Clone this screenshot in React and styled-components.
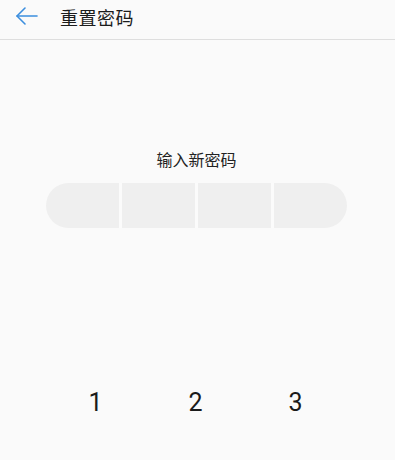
import React from "react";
import styled, { createGlobalStyle } from "styled-components";

const Global = createGlobalStyle`
  html, body {
    margin: 0;
    padding: 0;
    background: #fafafa;
    font-family: Roboto, "Noto Sans CJK SC", sans-serif;
  }
`;

const Page = styled.div`
  width: 395px;
  height: 460px;
  overflow: hidden;
  background: #fafafa;
  display: flex;
  flex-direction: column;
`;

const Header = styled.header`
  height: 39px;
  display: flex;
  align-items: center;
  border-bottom: 1.5px solid #dedede;
  padding-left: 14px;
  gap: 20px;
`;

const Back = styled.button`
  border: 0;
  background: none;
  padding: 0;
  width: 26px;
  height: 26px;
  display: flex;
  align-items: center;
  justify-content: center;
  margin-top: -8px;
`;

const Title = styled.h1`
  margin: -6px 0 0 0;
  font-size: 18px;
  font-weight: 400;
  color: #1c1c1c;
  letter-spacing: 0.5px;
`;

const Body = styled.main`
  display: flex;
  flex-direction: column;
  align-items: center;
  padding-top: 110px;
`;

const Prompt = styled.div`
  font-size: 16px;
  color: #222;
  line-height: 22px;
  margin-left: -2px;
`;

const Slots = styled.div`
  margin-top: 11px;
  width: 301px;
  height: 45px;
  border-radius: 23px;
  overflow: hidden;
  display: grid;
  grid-template-columns: repeat(4, 1fr);
  gap: 3px;
  background: #fbfbfb;
  margin-right: 2px;
`;

const Slot = styled.div`
  background: #efefef;
`;

const Keys = styled.div`
  margin-top: 160px;
  width: 300px;
  display: grid;
  grid-template-columns: repeat(3, 1fr);
  margin-right: 4px;
`;

const Key = styled.div`
  text-align: center;
  font-size: 25px;
  font-weight: 400;
  color: #1a1a1a;
  line-height: 30px;
`;

export default function App() {
  return (
    <Page>
      <Global />
      <Header>
        <Back aria-label="back">
          <svg width="24" height="20" viewBox="0 0 24 20" fill="none" stroke="#3b8ede" strokeWidth="1.6" strokeLinecap="round" strokeLinejoin="round">
            <path d="M22 10H2" />
            <path d="M10 2L2 10l8 8" />
          </svg>
        </Back>
        <Title>重置密码</Title>
      </Header>
      <Body>
        <Prompt>输入新密码</Prompt>
        <Slots>
          <Slot />
          <Slot />
          <Slot />
          <Slot />
        </Slots>
        <Keys>
          <Key>1</Key>
          <Key>2</Key>
          <Key>3</Key>
        </Keys>
      </Body>
    </Page>
  );
}
